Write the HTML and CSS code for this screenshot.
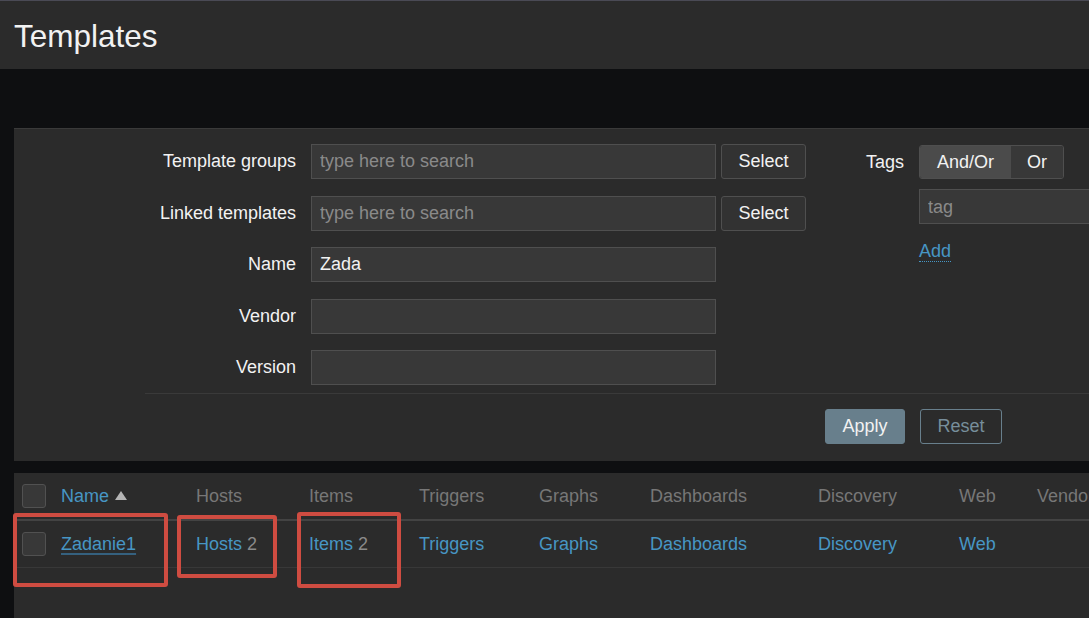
FILE: index.html
```html
<!DOCTYPE html>
<html lang="en">
<head>
<meta charset="utf-8">
<title>Templates</title>
<link rel="stylesheet" href="styles.css">
</head>
<body>
<header class="page-header"><h1>Templates</h1></header>
<main class="content">
  <section class="filter">
    <div class="filter-body">
      <div class="filter-left">
        <div class="frow"><label class="flabel">Template groups</label><input class="finput" type="text" placeholder="type here to search"><button class="btn-select">Select</button></div>
        <div class="frow"><label class="flabel">Linked templates</label><input class="finput" type="text" placeholder="type here to search"><button class="btn-select">Select</button></div>
        <div class="frow"><label class="flabel">Name</label><input class="finput" type="text" value="Zada"></div>
        <div class="frow"><label class="flabel">Vendor</label><input class="finput" type="text"></div>
        <div class="frow"><label class="flabel">Version</label><input class="finput" type="text"></div>
      </div>
      <div class="filter-tags">
        <div class="tags-label">Tags</div>
        <div class="tags-stack">
          <div class="radio">
            <span class="seg seg-active">And/Or</span><span class="seg">Or</span>
          </div>
          <input class="tag-input" type="text" placeholder="tag">
          <a class="add-link" href="#">Add</a>
        </div>
      </div>
    </div>
    <div class="filter-footer">
      <button class="btn-apply">Apply</button>
      <button class="btn-reset">Reset</button>
    </div>
  </section>
  <section class="list">
    <div class="grid">
      <div class="cell head"><span class="checkbox"></span></div>
      <div class="cell head"><a class="link" href="#">Name</a><svg class="sort" width="12" height="9" viewBox="0 0 12 9"><path d="M6 0 L12 9 L0 9 Z" fill="#b4b4b4"/></svg></div>
      <div class="cell head">Hosts</div>
      <div class="cell head">Items</div>
      <div class="cell head">Triggers</div>
      <div class="cell head">Graphs</div>
      <div class="cell head">Dashboards</div>
      <div class="cell head">Discovery</div>
      <div class="cell head">Web</div>
      <div class="cell head">Vendor</div>

      <div class="cell row"><span class="checkbox"></span></div>
      <div class="cell row"><a class="link link-under" href="#">Zadanie1</a></div>
      <div class="cell row"><a class="link" href="#">Hosts</a><span class="count">2</span></div>
      <div class="cell row"><a class="link" href="#">Items</a><span class="count">2</span></div>
      <div class="cell row"><a class="link" href="#">Triggers</a></div>
      <div class="cell row"><a class="link" href="#">Graphs</a></div>
      <div class="cell row"><a class="link" href="#">Dashboards</a></div>
      <div class="cell row"><a class="link" href="#">Discovery</a></div>
      <div class="cell row"><a class="link" href="#">Web</a></div>
      <div class="cell row"></div>
    </div>
  </section>
</main>
<div class="annot annot-1"></div>
<div class="annot annot-2"></div>
<div class="annot annot-3"></div>
</body>
</html>
```

FILE: styles.css
```css
* { box-sizing: border-box; }

html, body {
  margin: 0;
  width: 1089px;
  height: 618px;
  overflow: hidden;
}

body {
  position: relative;
  background: #0e0f11;
  font-family: "Liberation Sans", Arial, sans-serif;
  font-size: 18px;
  color: #f2f2f2;
}

.page-header {
  height: 69px;
  border-top: 1px solid #4a4a55;
  background: #2b2b2b;
  padding: 2px 0 0 14px;
}

.page-header h1 {
  margin: 0;
  font-size: 31.5px;
  font-weight: normal;
  line-height: 66px;
  color: #f2f2f2;
}

.content {
  display: flex;
  flex-direction: column;
  gap: 12px;
  padding: 59px 0 0 14px;
  height: 549px;
}

.filter {
  width: 1100px;
  flex: none;
  height: 333px;
  background: #2b2b2b;
  border-top: 1px solid #3a3a3a;
  padding-top: 15px;
}

.filter-body {
  display: flex;
  margin-left: 131px;
  padding-bottom: 8px;
  border-bottom: 1px solid #3a3a3a;
}

.filter-left {
  display: flex;
  flex-direction: column;
  gap: 16.5px;
}

.frow {
  display: flex;
  align-items: center;
  height: 35px;
}

.flabel {
  width: 151px;
  margin-right: 15px;
  text-align: right;
  white-space: nowrap;
}

.finput, .tag-input {
  width: 405px;
  height: 35px;
  background: #383838;
  border: 1px solid #4f4f4f;
  border-radius: 0;
  color: #f2f2f2;
  font-family: inherit;
  font-size: 18px;
  padding: 0 8px;
  outline: none;
}

.finput::placeholder, .tag-input::placeholder {
  color: #8a8a8a;
}

.btn-select {
  width: 85px;
  height: 35px;
  margin-left: 5px;
  background: #323232;
  border: 1px solid #4f4f4f;
  border-radius: 3px;
  color: #f2f2f2;
  font-family: inherit;
  font-size: 18px;
  padding: 0;
}

.filter-tags {
  display: flex;
  align-items: flex-start;
}

.tags-label {
  width: 98px;
  margin-right: 15px;
  text-align: right;
  line-height: 35px;
  margin-top: 1px;
}

.tags-stack {
  display: flex;
  flex-direction: column;
  align-items: flex-start;
  padding-top: 1px;
}

.radio {
  display: flex;
  height: 34px;
  border: 1px solid #4f4f4f;
  border-radius: 3px;
  overflow: hidden;
}

.seg {
  display: flex;
  align-items: center;
  justify-content: center;
  width: 52px;
  background: #383838;
}

.seg-active {
  width: 91px;
  background: #4b4b4b;
}

.tag-input {
  width: 260px;
  margin-top: 10px;
  padding-top: 1px;
}

.add-link {
  margin-top: 17px;
  color: #4796c4;
  text-decoration: none;
  line-height: 20px;
  border-bottom: 1px dotted #4796c4;
}

.filter-footer {
  display: flex;
  gap: 15px;
  padding: 15px 0 0 811px;
}

.btn-apply, .btn-reset {
  height: 35px;
  border-radius: 3px;
  font-family: inherit;
  font-size: 18px;
  padding: 0;
}

.btn-apply {
  width: 80px;
  background: #687f8c;
  border: 1px solid #687f8c;
  color: #f2f2f2;
}

.btn-reset {
  width: 82px;
  background: transparent;
  border: 1px solid #687f8c;
  color: #778e9b;
}

.list {
  width: 1100px;
  flex: 1;
  background: #2b2b2b;
}

.grid {
  display: grid;
  grid-template-columns: 47px 135px 113px 110px 120px 111px 168px 141px 78px 100px;
}

.cell {
  display: flex;
  align-items: center;
  white-space: nowrap;
}

.head {
  height: 48px;
  border-bottom: 2px solid #434343;
  color: #777777;
}

.row {
  height: 47px;
  border-bottom: 1px solid #383838;
}

.checkbox {
  display: block;
  width: 24px;
  height: 24px;
  margin-left: 8px;
  background: #383838;
  border: 1px solid #515151;
  border-radius: 3px;
}

.link {
  color: #4796c4;
  text-decoration: none;
}

.link-under {
  text-decoration: underline;
  text-decoration-color: #35617f;
  text-decoration-thickness: 2px;
  text-underline-offset: 3px;
}

.sort {
  margin-left: 6px;
  margin-top: -1px;
}

.count {
  color: #8a8a8a;
  margin-left: 5px;
}

.annot {
  position: absolute;
  border: 4px solid #cf4c41;
  border-radius: 3px;
}

.annot-1 { left: 13px; top: 513px; width: 155px; height: 74px; }
.annot-2 { left: 177px; top: 515px; width: 100px; height: 63px; }
.annot-3 { left: 297px; top: 512px; width: 104px; height: 76px; }
```
